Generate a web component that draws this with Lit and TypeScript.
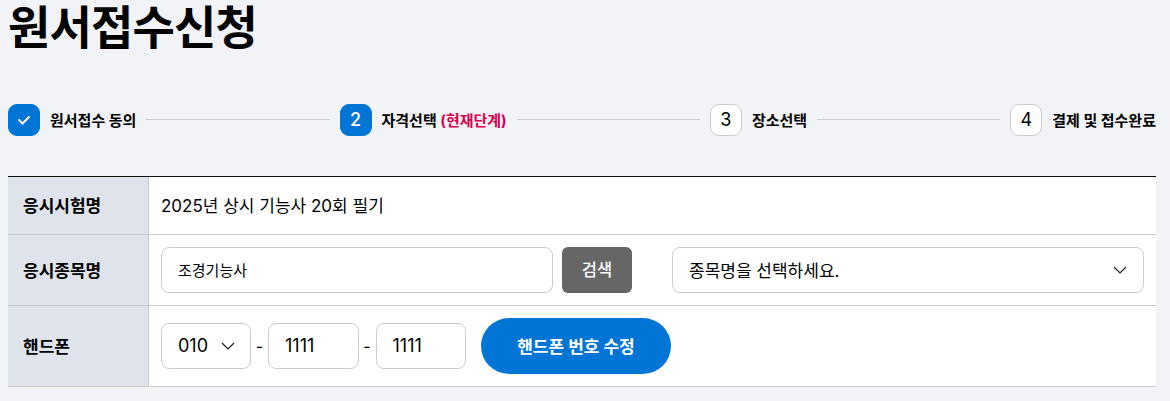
import { LitElement, html, css } from "lit";
import { customElement } from "lit/decorators.js";

const chevron = html`<svg class="chev" width="14" height="8" viewBox="0 0 14 8" fill="none"><path d="M1 1l6 6 6-6" stroke="#222" stroke-width="1.2"/></svg>`;

@customElement("app-root")
export class AppRoot extends LitElement {
  static styles = css`
    :host { display: block; height: 401px; background: #f2f3f7; overflow: hidden; padding: 0 14px 0 8px; box-sizing: border-box;
      font-family: Inter, "Noto Sans CJK KR", sans-serif; color: #000; }
    h1 { margin: 0; font-size: 46px; line-height: 54px; font-weight: 700; letter-spacing: -0.8px; height: 103px; }
    .steps { display: flex; align-items: center; height: 33px; margin-bottom: 40px; }
    .step { display: flex; align-items: center; gap: 10px; font-size: 15px; font-weight: 700; white-space: nowrap; }
    .num { width: 32px; height: 32px; box-sizing: border-box; border-radius: 9px; display: flex; align-items: center; justify-content: center; font-size: 18px; font-weight: 400; background: #fff; border: 1px solid #ccc; }
    .num.on { background: #0075d5; border-color: #0075d5; color: #fff; font-weight: 500; }
    .line { flex: 1; height: 1px; background: #ccc; margin: 0 10px; }
    em { font-style: normal; color: #d9004c; }
    .table { border-top: 1px solid #111; background: #fff; }
    .row { display: grid; grid-template-columns: 141px 1fr; border-bottom: 1px solid #ccc; }
    .th { background: #dfe3eb; border-right: 1px solid #ccc; display: flex; align-items: center; padding: 0 0 2px 15px; font-size: 17px; font-weight: 700; }
    .td { display: flex; align-items: center; padding: 0 12px; font-size: 17px; }
    .t { padding-bottom: 2px; }
    .r1 { height: 57px; } .r2 { height: 70px; } .r3 { height: 80px; }
    .box { height: 46px; box-sizing: border-box; border: 1px solid #ccc; border-radius: 8px; background: #fff; display: flex; align-items: center; padding: 0 16px; font-size: 17px; }
    .search { width: 392px; font-size: 15px; }
    .btn { width: 70px; height: 46px; margin-left: 9px; margin-right: 40px; padding-bottom: 2px; box-sizing: border-box; border-radius: 6px; background: #666; color: #fff; display: flex; align-items: center; justify-content: center; font-size: 16.5px; font-weight: 500; }
    .select { flex: 1; justify-content: space-between; padding-right: 16px; }
    .phone { width: 90px; justify-content: space-between; padding-right: 15px; font-size: 18px; }
    .seg { width: 90.5px; font-size: 18px; }
    .dash { width: 17px; text-align: center; font-size: 16px; }
    .edit { width: 190px; height: 56px; margin-left: 15px; padding-bottom: 2px; box-sizing: border-box; border-radius: 28px; background: #0075d5; color: #fff; display: flex; align-items: center; justify-content: center; font-size: 17px; font-weight: 700; }
  `;
  render() {
    return html`
      <h1>원서접수신청</h1>
      <div class="steps">
        <div class="step"><span class="num on"><svg width="14" height="10" viewBox="0 0 14 10" fill="none"><path d="M1.5 4.5l4 4 7-7" stroke="#fff" stroke-width="2"/></svg></span>원서접수 동의</div>
        <div class="line"></div>
        <div class="step"><span class="num on">2</span><span>자격선택 <em>(현재단계)</em></span></div>
        <div class="line"></div>
        <div class="step"><span class="num">3</span>장소선택</div>
        <div class="line"></div>
        <div class="step"><span class="num">4</span>결제 및 접수완료</div>
      </div>
      <div class="table">
        <div class="row r1"><div class="th">응시시험명</div><div class="td"><span class="t">2025년 상시 기능사 20회 필기</span></div></div>
        <div class="row r2"><div class="th">응시종목명</div><div class="td">
          <div class="box search"><span class="t">조경기능사</span></div><div class="btn">검색</div>
          <div class="box select"><span class="t">종목명을 선택하세요.</span>${chevron}</div>
        </div></div>
        <div class="row r3"><div class="th">핸드폰</div><div class="td">
          <div class="box phone"><span class="t">010</span>${chevron}</div><span class="dash">-</span>
          <div class="box seg"><span class="t">1111</span></div><span class="dash">-</span>
          <div class="box seg"><span class="t">1111</span></div>
          <div class="edit">핸드폰 번호 수정</div>
        </div></div>
      </div>`;
  }
}
